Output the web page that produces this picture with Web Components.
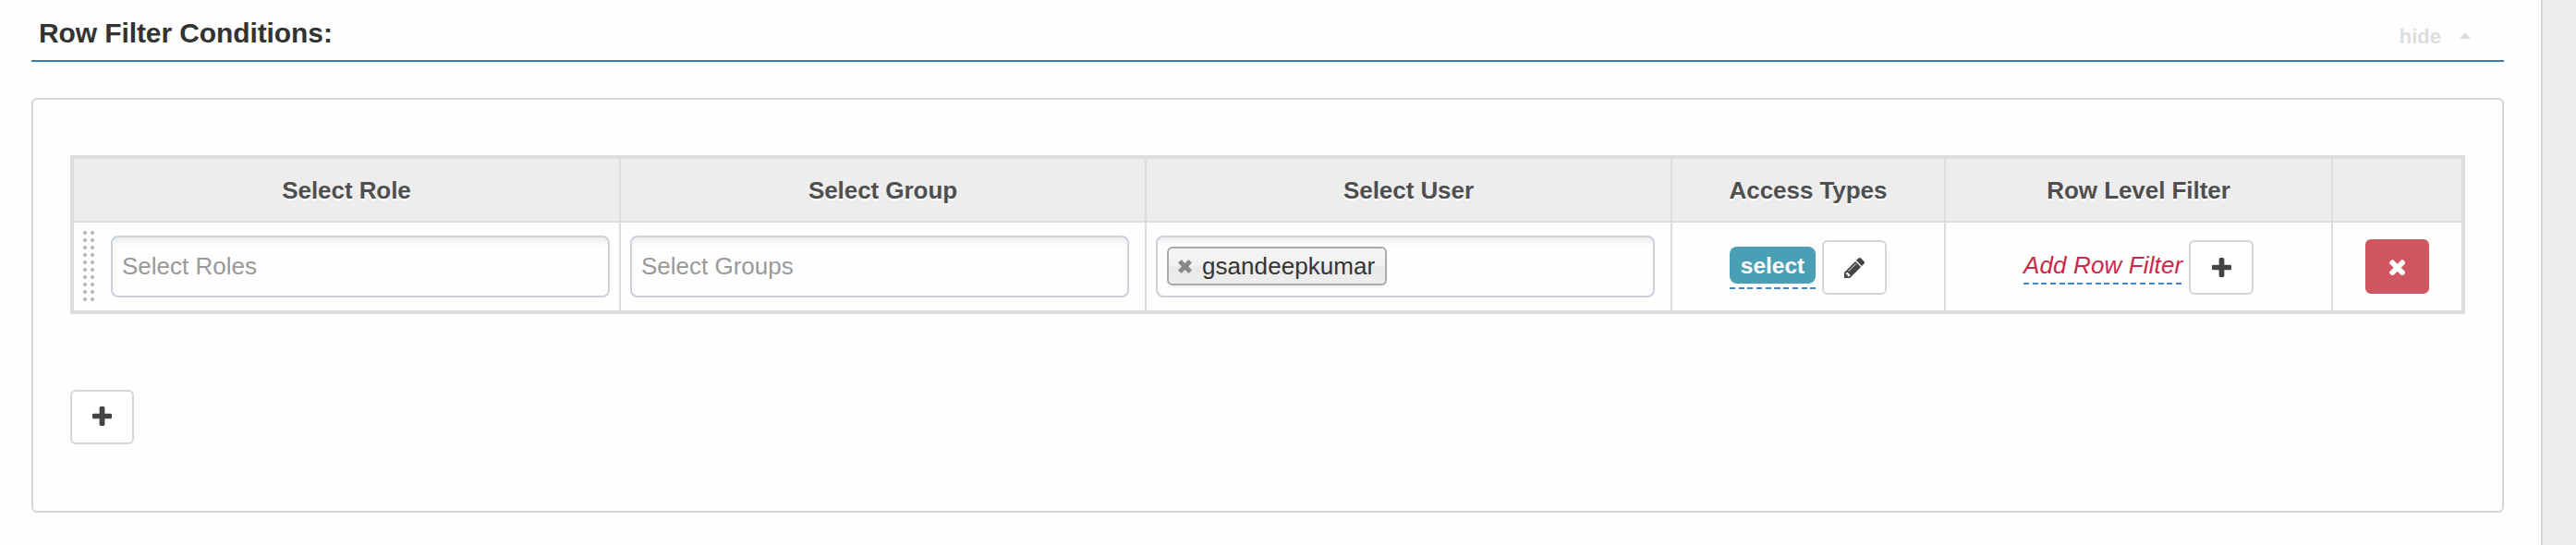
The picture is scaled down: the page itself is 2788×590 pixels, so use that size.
<!DOCTYPE html>
<html lang="en">
<head>
<meta charset="utf-8">
<title>Row Filter Conditions</title>
<style>
html,body{margin:0;height:100%}
body{background:#ededed;font-family:"Liberation Sans",Arial,sans-serif;font-size:26px;line-height:30px;color:#333;overflow:hidden}
</style>
</head>
<body>
<policy-page>
  <section-heading action="hide">Row Filter Conditions:</section-heading>
  <condition-panel>
    <filter-table>
      <header-cell>Select Role</header-cell>
      <header-cell>Select Group</header-cell>
      <header-cell>Select User</header-cell>
      <header-cell>Access Types</header-cell>
      <header-cell>Row Level Filter</header-cell>
      <header-cell></header-cell>
      <body-cell kind="drag"><drag-handle></drag-handle><multi-select placeholder="Select Roles"></multi-select></body-cell>
      <body-cell kind="field"><multi-select placeholder="Select Groups"></multi-select></body-cell>
      <body-cell kind="field"><multi-select><select-chip>gsandeepkumar</select-chip></multi-select></body-cell>
      <body-cell><editable-value><access-badge>select</access-badge></editable-value><icon-button icon="pencil"></icon-button></body-cell>
      <body-cell><editable-value kind="empty">Add Row Filter</editable-value><icon-button icon="plus"></icon-button></body-cell>
      <body-cell kind="action"><icon-button icon="times" kind="danger"></icon-button></body-cell>
    </filter-table>
    <icon-button icon="plus" kind="add"></icon-button>
  </condition-panel>
</policy-page>
<script>
const define = (name, html) => customElements.define(name, class extends HTMLElement {
  constructor() {
    super();
    this.attachShadow({mode: 'open'}).innerHTML = typeof html === 'function' ? html(this) : html;
  }
});

const icons = {
  plus: ['192 128 1408 1408', 'M1600 736v192q0 40-28 68t-68 28h-416v416q0 40-28 68t-68 28h-192q-40 0-68-28t-28-68v-416h-416q-40 0-68-28t-28-68v-192q0-40 28-68t68-28h416v-416q0-40 28-68t68-28h192q40 0 68 28t28 68v416h416q40 0 68 28t28 68z'],
  times: ['302 366 1188 1188', 'M1490 1322q0 40-28 68l-136 136q-28 28-68 28t-68-28l-294-294-294 294q-28 28-68 28t-68-28l-136-136q-28-28-28-68t28-68l294-294-294-294q-28-28-28-68t28-68l136-136q28-28 68-28t68 28l294 294 294-294q28-28 68-28t68 28l136 136q28 28 28 68t-28 68l-294 294 294 294q28 28 28 68z'],
  pencil: ['128 149 1515 1515', 'M491 1536l91-91-235-235-91 91v107h128v128h107zm523-928q0-22-22-22-10 0-17 7l-542 542q-7 7-7 17 0 22 22 22 10 0 17-7l542-542q7-7 7-17zm-54-192l416 416-832 832h-416v-416zm683 96q0 53-37 90l-166 166-416-416 166-165q36-38 90-38 53 0 91 38l235 234q37 39 37 91z']
};

define('policy-page', `<style>
:host{display:block;box-sizing:border-box;width:2752px;height:590px;padding:0 40px 0 34px;background:#fefefe;border-right:2px solid #d4d4d4}
</style><slot></slot>`);

define('section-heading', el => `<style>
:host{display:flex;justify-content:space-between;box-sizing:border-box;height:67px;padding:0 36px 0 8px;border-bottom:2px solid #3a7cab}
h2{margin:0;padding-top:18px;font-size:30px;line-height:36px;font-weight:bold;letter-spacing:-.1px}
.toggle{display:flex;gap:20px;padding-top:27px;font-size:22px;line-height:26px;font-weight:bold;color:#ddd}
svg{display:block;margin-top:8px;fill:#ddd}
</style><h2><slot></slot></h2><div class="toggle"><span>${el.getAttribute('action')}</span><svg width="12" height="7" viewBox="0 0 12 7"><path d="M0 7 6 0l6 7z"/></svg></div>`);

define('condition-panel', `<style>
:host{display:block;box-sizing:border-box;height:449px;margin-top:39px;padding:60px 40px;border:2px solid #d5d5d5;border-radius:6px}
</style><slot></slot>`);

define('filter-table', `<style>
:host{display:grid;grid-template-columns:590px 567px 567px 294px 417px 139px;grid-template-rows:67px 95px;gap:2px;border:4px solid #ddd;background:#ddd;width:2584px}
</style><slot></slot>`);

define('header-cell', `<style>
:host{display:flex;align-items:center;justify-content:center;background:#ededed;color:#4f4f4f;font-weight:bold;letter-spacing:-.06px;text-shadow:0 2px 0 #fff}
</style><slot></slot>`);

define('body-cell', `<style>
:host{display:flex;justify-content:center;gap:7px;padding-top:19px;background:#fefefe}
:host([kind=field]){justify-content:flex-start;padding:14px 0 0 10px}
:host([kind=drag]){justify-content:flex-start;gap:18px;padding:9px 0 0 10px}
:host([kind=drag]) ::slotted(multi-select){margin-top:5px}
:host([kind=action]){padding-top:18px}
</style><slot></slot>`);

define('drag-handle', `<style>
:host{display:block;width:12px;height:76px;background:radial-gradient(circle at 2px 2px,#b9b9b9 1.6px,transparent 2.3px) 0 0/8px 8px}
</style>`);

define('multi-select', el => `<style>
:host{display:block;box-sizing:border-box;width:540px;height:67px;padding:10px;border:2px solid #cbd1d8;border-radius:8px;background:linear-gradient(#eee 0,#fefefe 10px)}
.hint{display:block;padding-top:6px;color:#999}
</style><slot>${`<span class="hint">${el.getAttribute('placeholder') || ''}</span>`}</slot>`);

define('select-chip', `<style>
:host{display:inline-flex;box-sizing:border-box;width:238px;height:42px;padding:4px 0 0 10px;gap:11px;border:2px solid #aaa;border-radius:6px;background:linear-gradient(#f4f4f4 20%,#f0f0f0 50%,#e8e8e8 52%,#eee);box-shadow:0 2px 2px #0000000d;vertical-align:top;letter-spacing:.06px}
svg{display:block;width:15px;height:15px;margin-top:8px;fill:#888}
</style><svg viewBox="0 0 15 15"><path d="M3.6 0 7.5 3.9 11.4 0 15 3.6 11.1 7.5 15 11.4 11.4 15 7.5 11.1 3.6 15 0 11.4 3.9 7.5 0 3.6z"/></svg><slot></slot>`);

define('access-badge', `<style>
:host{display:block;box-sizing:border-box;width:93px;height:40px;padding-top:6px;border-radius:8px;background:#4a9fb5;color:#fff;font-size:24.5px;font-weight:bold;line-height:30px;text-align:center}
</style><slot></slot>`);

define('editable-value', `<style>
:host{display:block;height:46px;margin-top:7px;background:repeating-linear-gradient(90deg,#3a87cf 0 6px,transparent 6px 9.7px) 0 100%/100% 2px no-repeat}
:host([kind=empty]){width:172px;height:43px;margin-top:5px;color:#c92a49;font-style:italic;white-space:nowrap;letter-spacing:.13px}
:host([kind=empty]) slot{display:block;padding-top:7px}
</style><slot></slot>`);

define('icon-button', el => {
  const [box, path] = icons[el.getAttribute('icon')];
  return `<style>
:host{display:flex;justify-content:center;box-sizing:border-box;width:70px;height:59px;padding-top:17px;border:2px solid #d5d5d5;border-radius:6px;background:#fff;color:#444}
:host([kind=danger]){width:69px;padding-top:20px;border-color:#cf5660;background:#cf5660;color:#fff}
:host([kind=add]){width:69px;margin-top:82px;padding-top:16px}
svg{display:block;width:21px;height:21px;fill:currentColor}
:host([icon=pencil]) svg{width:22px;height:22px}
:host([icon=times]) svg{width:17.4px;height:17.4px}
</style><svg viewBox="${box}"><path d="${path}"/></svg>`;
});
</script>
</body>
</html>
